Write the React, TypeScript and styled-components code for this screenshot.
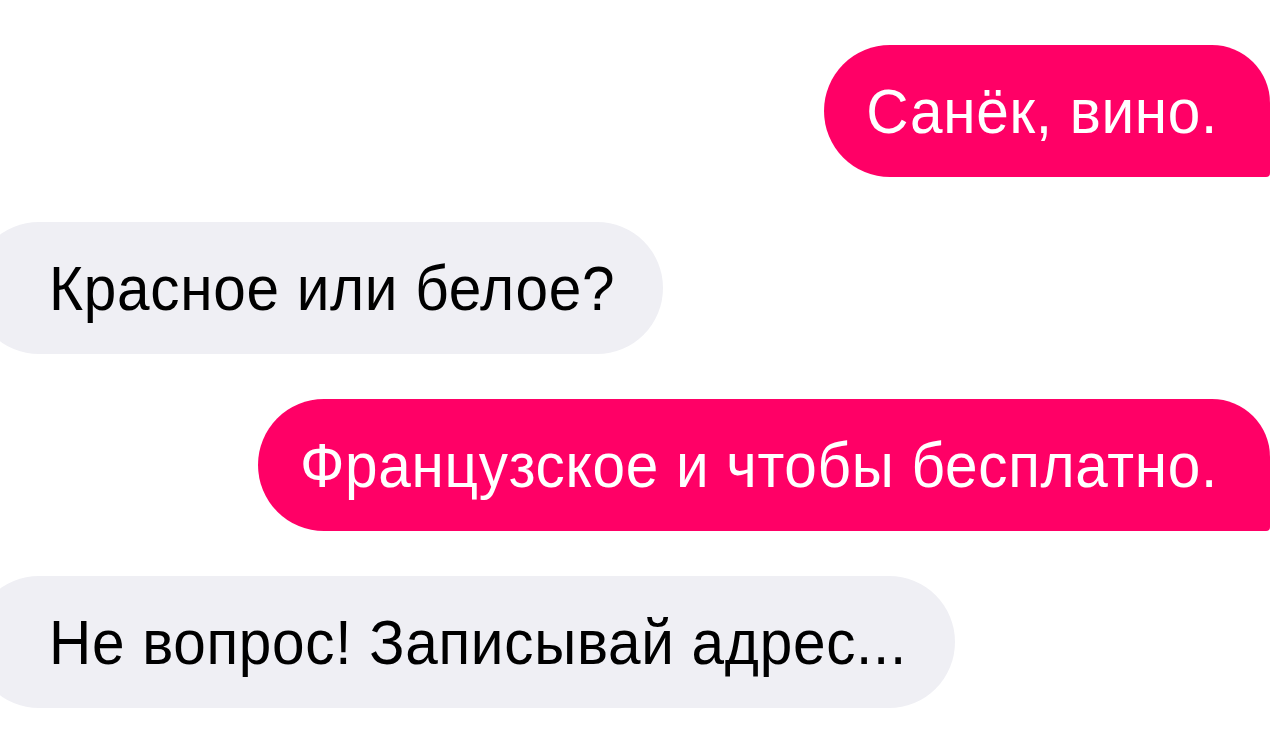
import React from 'react';
import styled, {createGlobalStyle} from 'styled-components';

const GlobalStyle = createGlobalStyle`
  html, body {
    margin: 0;
    padding: 0;
    background: #ffffff;
    overflow: hidden;
  }

  body {
    font-family: "Liberation Sans", Arial, sans-serif;
  }
`;

type Side = 'me' | 'them';

const messages: {from: Side; text: string}[] = [
    {from: 'me', text: 'Санёк, вино.'},
    {from: 'them', text: 'Красное или белое?'},
    {from: 'me', text: 'Французское и чтобы бесплатно.'},
    {from: 'them', text: 'Не вопрос! Записывай адрес...'},
];

export default function App() {
    return (
        <>
            <GlobalStyle/>
            <Chat>
                {messages.map((m, i) => (
                    <Row key={i} $from={m.from}>
                        <Bubble $from={m.from}>
                            <Text>{m.text}</Text>
                        </Bubble>
                    </Row>
                ))}
            </Chat>
        </>
    );
}

const Chat = styled.div`
  width: 1280px;
  height: 730px;
  box-sizing: border-box;
  padding: 45px 10px 0 0;
  display: flex;
  flex-direction: column;
  gap: 45px;
`;

const Row = styled.div<{ $from: Side }>`
  display: flex;
  justify-content: ${(p) => (p.$from === 'me' ? 'flex-end' : 'flex-start')};
`;

const Bubble = styled.div<{ $from: Side }>`
  height: 132px;
  box-sizing: border-box;
  display: flex;
  align-items: center;
  font-size: 58.5px;
  line-height: 1;
  white-space: nowrap;
  letter-spacing: 0.7px;
  ${(p) =>
    p.$from === 'me'
      ? `
    background: #ff0066;
    color: #ffffff;
    padding: 0 52px 0 42px;
    border-radius: 66px 58px 4px 66px;
  `
      : `
    background: #efeff4;
    color: #000000;
    margin-left: -27px;
    padding: 0 48px 0 76px;
    border-radius: 66px;
  `}
`;

// the screenshot font is a touch taller / narrower than Arial
const Text = styled.span`
  display: inline-block;
  transform: scaleY(1.09);
`;
